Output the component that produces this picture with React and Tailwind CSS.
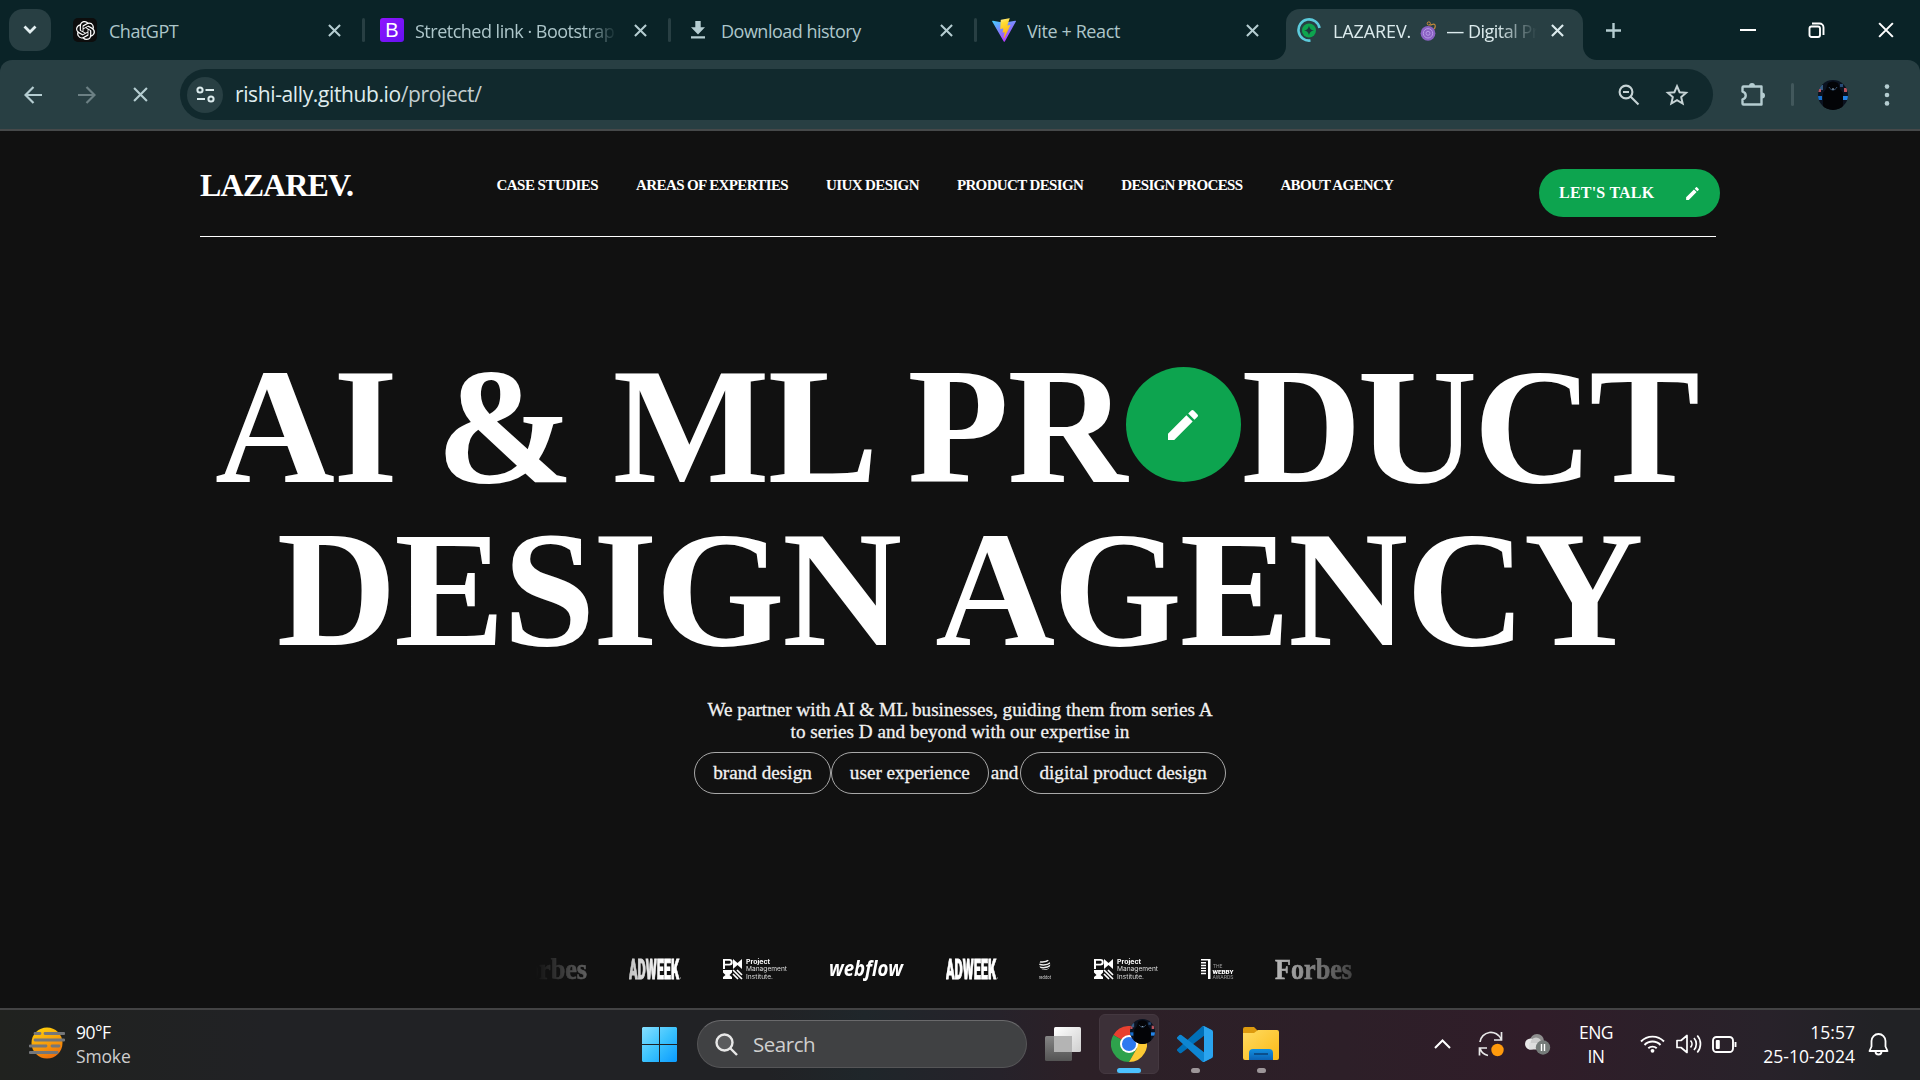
import React from "react";
import { MdModeEdit } from "react-icons/md";

const ui = "font-['Open_Sans','Noto_Sans',sans-serif]";
const serif = "font-['Liberation_Serif',serif]";

function Close({ size = 14, width = 2.2 }) {
  return (
    <svg width={size} height={size} viewBox="0 0 14 14" fill="none" stroke="currentColor" strokeWidth={width}>
      <path d="M1 1l12 12M13 1L1 13" />
    </svg>
  );
}

function OpenAIIcon() {
  return (
    <span className="-ml-px mr-px flex size-6 items-center justify-center rounded-[5px] bg-[#0d0d0d] text-white">
      <svg width="19" height="19" viewBox="0 0 24 24" fill="currentColor">
        <path d="M22.2819 9.8211a5.9847 5.9847 0 0 0-.5157-4.9108 6.0462 6.0462 0 0 0-6.5098-2.9A6.0651 6.0651 0 0 0 4.9807 4.1818a5.9847 5.9847 0 0 0-3.9977 2.9 6.0462 6.0462 0 0 0 .7427 7.0966 5.98 5.98 0 0 0 .511 4.9107 6.051 6.051 0 0 0 6.5146 2.9001A5.9847 5.9847 0 0 0 13.2599 24a6.0557 6.0557 0 0 0 5.7718-4.2058 5.9894 5.9894 0 0 0 3.9977-2.9001 6.0557 6.0557 0 0 0-.7475-7.0729zm-9.022 12.6081a4.4755 4.4755 0 0 1-2.8764-1.0408l.1419-.0804 4.7783-2.7582a.7948.7948 0 0 0 .3927-.6813v-6.7369l2.02 1.1686a.071.071 0 0 1 .038.052v5.5826a4.504 4.504 0 0 1-4.4945 4.4944zm-9.6607-4.1254a4.4708 4.4708 0 0 1-.5346-3.0137l.142.0852 4.783 2.7582a.7712.7712 0 0 0 .7806 0l5.8428-3.3685v2.3324a.0804.0804 0 0 1-.0332.0615L9.74 19.9502a4.4992 4.4992 0 0 1-6.1408-1.6464zM2.3408 7.8956a4.485 4.485 0 0 1 2.3655-1.9728V11.6a.7664.7664 0 0 0 .3879.6765l5.8144 3.3543-2.0201 1.1685a.0757.0757 0 0 1-.071 0l-4.8303-2.7865A4.504 4.504 0 0 1 2.3408 7.872zm16.5963 3.8558L13.1038 8.364 15.1192 7.2a.0757.0757 0 0 1 .071 0l4.8303 2.7913a4.4944 4.4944 0 0 1-.6765 8.1042v-5.6772a.79.79 0 0 0-.407-.667zm2.0107-3.0231l-.142-.0852-4.7735-2.7818a.7759.7759 0 0 0-.7854 0L9.409 9.2297V6.8974a.0662.0662 0 0 1 .0284-.0615l4.8303-2.7866a4.4992 4.4992 0 0 1 6.6802 4.66zM8.3065 12.863l-2.02-1.1638a.0804.0804 0 0 1-.038-.0567V6.0742a4.4992 4.4992 0 0 1 7.3757-3.4537l-.142.0805L8.704 5.459a.7948.7948 0 0 0-.3927.6813zm1.0976-2.3654l2.602-1.4998 2.6069 1.4998v2.9994l-2.5974 1.4997-2.6067-1.4997Z" />
      </svg>
    </span>
  );
}

function BootstrapIcon() {
  return (
    <span className="flex size-6 items-center justify-center rounded-[3px] bg-linear-to-br from-[#9013fe] to-[#6610f2] font-['Liberation_Sans',sans-serif] text-[20px] leading-none text-white">
      B
    </span>
  );
}

function DownloadIcon() {
  return (
    <svg width="24" height="24" viewBox="0 0 24 24" fill="#b5cdd1">
      <path d="M9.3 3h5.4v6.2H19L12 16.500 5 9.200h4.300zM5 18.300h14v2.200H5z" />
    </svg>
  );
}

function ViteIcon() {
  return (
    <svg width="24" height="24" viewBox="0 0 24 24">
      <defs>
        <linearGradient id="viteA" x1="0" y1="0" x2="0.6" y2="1">
          <stop offset="0" stopColor="#41d1ff" />
          <stop offset="1" stopColor="#bd34fe" />
        </linearGradient>
        <linearGradient id="viteB" x1="0.4" y1="0" x2="0.6" y2="1">
          <stop offset="0" stopColor="#ffea83" />
          <stop offset="0.2" stopColor="#ffdd35" />
          <stop offset="1" stopColor="#ffa800" />
        </linearGradient>
      </defs>
      <path d="M23.900 3.600L12.800 23.500a.6.6 0 0 1-1.050 0L.2 3.600a.6.6 0 0 1 .65-.9L12 4.700l11.200-2a.6.6 0 0 1 .7.9z" fill="url(#viteA)" />
      <path d="M17.300.2L9 1.800a.35.35 0 0 0-.25.3l-.5 8.600c0 .2.180.350.380.300l2.300-.530c.2-.05.400.140.360.350l-.7 3.400c-.05.220.160.420.380.350l1.420-.430c.220-.070.430.120.380.350l-1.080 5.200c-.07.330.360.500.550.230l6.200-12.600c.1-.2-.08-.450-.300-.400l-2.400.460c-.22.050-.42-.17-.35-.39L17.700.6c.06-.22-.15-.430-.4-.400z" fill="url(#viteB)" />
    </svg>
  );
}

function LoadingIcon() {
  return (
    <svg width="24" height="24" viewBox="0 0 24 24" fill="none">
      <path d="M22.500 10A10.600 10.600 0 1 0 13.500 22.500" stroke="#5ccbdc" strokeWidth="2.600" />
      <circle cx="12" cy="12.500" r="7" fill="#0ea44f" />
      <path d="M12 7.500c.7 3.300 1.700 4.300 5 5-3.300.7-4.300 1.700-5 5-.7-3.300-1.700-4.300-5-5 3.300-.7 4.300-1.700 5-5z" fill="#1c3a3d" />
    </svg>
  );
}

/* Small purple bomb with a curled fuse. */
function BombIcon() {
  return (
    <svg width="17" height="20" viewBox="0 0 17 20" fill="none" className="mx-[9px] shrink-0">
      <path d="M14 8c1.500-1.500 1.700-4 .3-4.700-1.600-.8-2.800 1.200-4.600.6" stroke="#c98a3b" strokeWidth="1.200" />
      <circle cx="8.800" cy="2.500" r="1.600" stroke="#c98a3b" />
      <circle cx="8" cy="12.300" r="7.400" fill="#8b62c4" />
      <circle cx="8" cy="12.300" r="4.700" stroke="#b79ae6" />
      <circle cx="8" cy="12.300" r="2" stroke="#b79ae6" />
    </svg>
  );
}

function Tab({ icon, label, track, fade }) {
  return (
    <div className="flex h-[60px] w-[306px] shrink-0 items-center pl-[15px]">
      {icon}
      <span
        className={`ml-[11px] w-[200px] overflow-hidden whitespace-nowrap pt-px text-[18px] leading-6 text-[#adc6ca] ${track} ${
          fade ? "[mask-image:linear-gradient(to_right,#000_170px,transparent_202px)]" : ""
        }`}
      >
        {label}
      </span>
      <span className="ml-[19px] text-[#b5cdd1]">
        <Close size={13} />
      </span>
      <span className="ml-auto h-6 w-[3px] rounded bg-[#283f43]" />
    </div>
  );
}

function TabStrip() {
  return (
    <div className="flex h-[60px] items-center bg-[#0a2327]">
      <button className="ml-[9px] mr-2 flex size-[42px] shrink-0 items-center justify-center rounded-[14px] bg-[#283f43] text-[#e4f0f2]">
        <svg width="14" height="10" viewBox="0 0 14 10" fill="none" stroke="currentColor" strokeWidth="2.800">
          <path d="M1.500 1.500L7 7l5.500-5.500" />
        </svg>
      </button>
      <Tab icon={<OpenAIIcon />} label="ChatGPT" track="tracking-[-0.5px]" />
      <Tab icon={<BootstrapIcon />} label="Stretched link · Bootstrap v5" track="tracking-[-0.5px]" fade />
      <Tab icon={<DownloadIcon />} label="Download history" track="tracking-[-0.5px]" />
      <div className="w-[302px] shrink-0 overflow-hidden">
        <Tab icon={<ViteIcon />} label="Vite + React" track="tracking-[-0.4px]" />
      </div>
      <div className="relative ml-[7px] mt-[9px] flex h-[51px] w-[297px] shrink-0 items-center rounded-t-[14px] bg-[#283f43] pb-[9px] pl-[11px]">
        <svg className="absolute -left-[14px] bottom-0" width="14" height="14" viewBox="0 0 14 14" fill="#283f43">
          <path d="M14 0v14H0A14 14 0 0 0 14 0z" />
        </svg>
        <svg className="absolute -right-[14px] bottom-0" width="14" height="14" viewBox="0 0 14 14" fill="#283f43">
          <path d="M0 0v14h14A14 14 0 0 1 0 0z" />
        </svg>
        <LoadingIcon />
        <span className="ml-3 flex w-[204px] items-center overflow-hidden whitespace-nowrap pt-px text-[18px] leading-6 tracking-[-0.5px] text-[#dcebed] [mask-image:linear-gradient(to_right,#000_165px,transparent_204px)]">
          <span className="tracking-[-0.1px]">LAZAREV.</span>
          <BombIcon />
          — Digital Product
        </span>
        <span className="ml-[14px] text-[#dcebed]">
          <Close size={13} width={2.300} />
        </span>
      </div>
      <svg className="ml-[22px] text-[#b5cdd1]" width="17" height="17" viewBox="0 0 17 17" stroke="currentColor" strokeWidth="2.400">
        <path d="M8.500 1v15M1 8.500h15" />
      </svg>
      <div className="ml-auto flex text-white">
        <span className="flex h-[60px] w-[69px] items-center justify-center">
          <span className="h-[2px] w-4 bg-white" />
        </span>
        <span className="flex h-[60px] w-[69px] items-center justify-center">
          <svg width="17" height="17" viewBox="0 0 17 17" fill="none" stroke="currentColor" strokeWidth="1.900">
            <rect x="1.500" y="4.500" width="10.500" height="10.500" rx="2" />
            <path d="M4 1.500h7.500a4 4 0 0 1 4 4V13" />
          </svg>
        </span>
        <span className="flex h-[60px] w-[69px] items-center justify-center">
          <Close size={16} width={1.800} />
        </span>
      </div>
    </div>
  );
}

/* Dark figure lit by blue and red lights; used in the toolbar and on the taskbar. */
function Avatar({ size }) {
  return (
    <svg width={size} height={size} viewBox="0 0 30 30">
      <defs>
        <clipPath id={"av" + size}>
          <circle cx="15" cy="15" r="15" />
        </clipPath>
      </defs>
      <g clipPath={`url(#av${size})`}>
        <rect width="30" height="30" fill="#0a1220" />
        <rect x="1" y="5" width="4" height="5" fill="#355b82" />
        <rect x="0" y="9" width="3" height="3" fill="#b8525c" />
        <rect x="0" y="16" width="4" height="4" fill="#1670cf" />
        <rect x="26" y="8" width="3" height="4" fill="#b8525c" />
        <rect x="25" y="16" width="5" height="4" fill="#2384e6" />
        <rect x="22" y="4" width="3" height="3" fill="#284c77" />
        <path d="M10 3q5-3 10 0l2 6 3 4v17H5V13l3-4z" fill="#030407" />
        <path d="M11 7c2 4 6 4 8 0" stroke="#34506f" fill="none" />
        <path d="M14 9h2" stroke="#9cb6cc" />
      </g>
    </svg>
  );
}

function Toolbar() {
  return (
    <div className="bg-[#0a2327]">
      <div className="flex h-[69px] items-center rounded-t-[12px] bg-[#283f43] text-[#b5cdd1]">
        <svg className="ml-6" width="18" height="18" viewBox="0 0 18 18" fill="none" stroke="currentColor" strokeWidth="2.200">
          <path d="M18 9H2M9.500 1L1.500 9l8 8" />
        </svg>
        <svg className="ml-9 text-[#6c8084]" width="18" height="18" viewBox="0 0 18 18" fill="none" stroke="currentColor" strokeWidth="2.200">
          <path d="M0 9h16M8.500 1l8 8-8 8" />
        </svg>
        <span className="ml-[37px]">
          <Close size={15} width={2} />
        </span>
        <div className="ml-8 flex h-[51px] w-[1533px] items-center rounded-full bg-[#11292d]">
          <span className="ml-[7px] flex size-9 items-center justify-center rounded-full bg-[#283f43] text-[#dcebed]">
            <svg width="19" height="17" viewBox="0 0 19 17" fill="none" stroke="currentColor" strokeWidth="2">
              <circle cx="4" cy="4" r="2.600" />
              <path d="M9.500 4H18M1 13h8" />
              <circle cx="15" cy="13" r="2.600" />
            </svg>
          </span>
          <span className="-mt-px ml-3 whitespace-nowrap text-[21px] leading-7 tracking-[-0.38px] text-[#dfecee]">
            rishi-ally.github.io<span className="text-[#c4cfd1]">/project/</span>
          </span>
          <svg className="ml-auto text-[#c6d3d5]" width="22" height="22" viewBox="0 0 22 22" fill="none" stroke="currentColor" strokeWidth="2.100">
            <circle cx="8" cy="8" r="6.400" />
            <path d="M5 8h6M12.500 12.500l8 8" />
          </svg>
          <svg className="ml-[25px] mr-6 text-[#c6d3d5]" width="24" height="24" viewBox="0 0 24 24" fill="none" stroke="currentColor" strokeWidth="2">
            <path d="M12 3.200l2.600 6 6.500.6-4.900 4.300 1.450 6.400L12 17.100l-5.650 3.400 1.450-6.400-4.900-4.300 6.500-.6z" />
          </svg>
        </div>
        <svg className="ml-[27px]" width="26" height="26" viewBox="0 0 26 26" fill="none" stroke="currentColor" strokeWidth="2.400">
          <path d="M3.500 4.500h18v18h-18a1 1 0 0 1-1-1v-4.200c4.300-1 4.300-6.700 0-7.700V5.500a1 1 0 0 1 1-1z" strokeLinejoin="round" />
          <path d="M9 4a3 3 0 0 1 6 0zM22 10.500a3 3 0 0 1 0 6z" fill="currentColor" stroke="none" />
        </svg>
        <span className="ml-[25px] h-[23px] w-[3px] rounded bg-[#42585c]" />
        <span className="ml-6">
          <Avatar size={30} />
        </span>
        <svg className="ml-[36px]" width="6" height="22" viewBox="0 0 6 22" fill="currentColor">
          <circle cx="3" cy="2.600" r="2.300" />
          <circle cx="3" cy="11" r="2.300" />
          <circle cx="3" cy="19.400" r="2.300" />
        </svg>
      </div>
      <div className="h-[2px] bg-[#46494a]" />
    </div>
  );
}

const links = [
  { label: "CASE STUDIES", track: "tracking-[-0.53px]" },
  { label: "AREAS OF EXPERTIES", track: "tracking-[-0.62px]" },
  { label: "UIUX DESIGN", track: "tracking-[-0.62px]" },
  { label: "PRODUCT DESIGN", track: "tracking-[-0.63px]" },
  { label: "DESIGN PROCESS", track: "tracking-[-0.66px]" },
  { label: "ABOUT AGENCY", track: "tracking-[-0.68px]" },
];

function SiteHeader() {
  return (
    <header className="mx-[200px] flex h-[106px] w-[1516px] items-start border-b border-white font-bold text-white">
      <div className="mt-[36px] w-[296.5px] text-[32px] leading-[36px] tracking-[-0.9px]">LAZAREV.</div>
      <nav className="mt-[45px] flex gap-[38px] whitespace-nowrap text-[15px] leading-[18px]">
        {links.map((l) => (
          <a key={l.label} className={l.track}>
            {l.label}
          </a>
        ))}
      </nav>
      <button className="-mr-1 ml-auto mt-[38px] flex h-12 w-[181px] items-center whitespace-nowrap rounded-full bg-[#0da44f] pl-5 pr-[19px] text-[16px] tracking-[0.22px]">
        LET'S TALK
        <MdModeEdit className="ml-auto size-[17px]" />
      </button>
    </header>
  );
}

function Hero() {
  return (
    <section className="flex flex-col items-center text-white">
      <h1 className="mt-[108px] whitespace-nowrap text-center text-[166px] font-bold leading-[163px]">
        <span className="flex justify-center pr-[9px]">
          <span className="tracking-[-1.6px]">AI &amp; ML PR</span>
          <span className="mt-[22px] flex size-[115px] items-center justify-center rounded-full bg-[#0da44f]">
            <MdModeEdit className="size-10" />
          </span>
          <span className="ml-px tracking-[-4px]">DUCT</span>
        </span>
        <span className="block pr-0.5 tracking-[-2.2px] [word-spacing:5px]">DESIGN AGENCY</span>
      </h1>
      <p className="mt-7 w-[520px] text-center text-[19.2px] leading-[22px] text-[#f2f2f2] [-webkit-text-stroke:0.3px_#f2f2f2]">
        We partner with AI &amp; ML businesses, guiding them from series A
        <br />
        to series D and beyond with our expertise in
      </p>
      <div className="mt-[9px] flex items-center text-[19.2px] leading-[22px] text-[#f2f2f2] [-webkit-text-stroke:0.3px_#f2f2f2]">
        <span className="flex h-[42px] items-center rounded-[21px] border border-[#a8a8a8] px-[18px]">brand design</span>
        <span className="flex h-[42px] items-center rounded-[21px] border border-[#a8a8a8] px-[18px]">user experience</span>
        <span className="px-0.5">and</span>
        <span className="flex h-[42px] items-center rounded-[21px] border border-[#a8a8a8] px-[18px]">digital product design</span>
      </div>
    </section>
  );
}

function Forbes() {
  return (
    <svg width="77" height="22" viewBox="0 0 77 22" className="shrink-0">
      <text x="0" y="20.500" textLength="77" lengthAdjust="spacingAndGlyphs" fontFamily="Liberation Serif, serif" fontWeight="700" fontSize="29" fill="#d4d4d4" stroke="#d4d4d4" strokeWidth="0.600">
        Forbes
      </text>
    </svg>
  );
}

function Adweek() {
  return (
    <svg width="52" height="22" viewBox="0 0 52 22" className="shrink-0">
      <text x="0" y="20.500" textLength="50" lengthAdjust="spacingAndGlyphs" fontFamily="Roboto, sans-serif" fontWeight="900" fontSize="27.500" fill="#fff" stroke="#fff" strokeWidth="0.900">
        ADWEEK
      </text>
      <rect x="51" y="19.500" width="1" height="1" fill="#aaa" />
    </svg>
  );
}

function Pmi() {
  return (
    <svg width="65" height="22" viewBox="0 0 65 22" className="shrink-0" fontFamily="Inter, sans-serif" fontSize="6.500">
      <g fill="#fff">
        <path d="M0 1h6.500a3.200 3.200 0 0 1 0 6.400H2V11H0zM2 2.800v2.900h4.300a1.450 1.450 0 0 0 0-2.900z" fillRule="evenodd" />
        <path d="M10 1l4.500 4L19 1v10l-4.500-4L10 11z" />
        <path d="M0 12h9v2.500L6.500 17 9 19v2H0v-2l2.500-2L0 14.500z" />
      </g>
      <path d="M10 12l9 9M14 12l5 5M10 16l5 5" stroke="#fff" strokeWidth="1.700" />
      <text x="23" y="6.400" fontWeight="700" textLength="24" lengthAdjust="spacingAndGlyphs" fill="#fff">Project</text>
      <text x="23" y="13.400" textLength="41" lengthAdjust="spacingAndGlyphs" fill="#ddd">Management</text>
      <text x="23" y="20.600" textLength="27" lengthAdjust="spacingAndGlyphs" fill="#ddd">Institute.</text>
    </svg>
  );
}

function Webflow() {
  return (
    <svg width="75" height="26" viewBox="0 0 75 26" className="shrink-0">
      <text x="0" y="20" textLength="74" lengthAdjust="spacingAndGlyphs" fontFamily="Open Sans, sans-serif" fontStyle="italic" fontWeight="700" fontSize="21" fill="#fff">
        webflow
      </text>
    </svg>
  );
}

function Reddot() {
  return (
    <svg width="13" height="22" viewBox="0 0 13 22" className="shrink-0">
      <defs>
        <clipPath id="dot">
          <circle cx="5.800" cy="6.500" r="5.500" />
        </clipPath>
      </defs>
      <g clipPath="url(#dot)" stroke="#eee" strokeWidth="1.500" fill="none">
        <path d="M0 3.500q6 2 11-2.500M0 6.300q7 2 12-2M0 9q7 2 12-2M1 11.800q6 1.500 11-2" />
      </g>
      <text x="0" y="21" textLength="12" lengthAdjust="spacingAndGlyphs" fontFamily="Roboto, sans-serif" fontSize="4.500" fill="#ccc">
        reddot
      </text>
    </svg>
  );
}

function Webby() {
  return (
    <svg width="33" height="22" viewBox="0 0 33 22" className="shrink-0" fontFamily="Roboto, sans-serif" fontSize="5">
      <path d="M0 1h9.500v20H7V2.500H0zM0 4h5v1.500H0zM0 6.700h5v1.500H0zM0 9.400h5v1.500H0zM0 12.100h5v1.500H0zM0 14.800h5v1.500H0z" fill="#fff" />
      <text x="12" y="9.500" fill="#999">THE</text>
      <text x="11.500" y="15.500" fontWeight="900" textLength="21" lengthAdjust="spacingAndGlyphs" fill="#fff">WEBBY</text>
      <text x="11.500" y="21" textLength="21" lengthAdjust="spacingAndGlyphs" fill="#999">AWARDS</text>
    </svg>
  );
}

function Partners() {
  return (
    <div className="mx-auto mb-[26px] mt-auto flex h-[26px] w-[850px] items-center overflow-hidden [mask-image:linear-gradient(to_right,transparent,#000_15%,#000_85%,transparent)]">
      <span className="-ml-[25px]">
        <Forbes />
      </span>
      <div className="ml-[42px] flex items-center gap-[41.6px]">
        <Adweek />
        <Pmi />
        <Webflow />
        <Adweek />
        <Reddot />
        <Pmi />
        <Webby />
        <Forbes />
      </div>
    </div>
  );
}

function WeatherIcon() {
  return (
    <svg width="36" height="32" viewBox="0 0 36 32">
      <defs>
        <linearGradient id="sun" x1="0.300" y1="0" x2="0.700" y2="1">
          <stop offset="0" stopColor="#ffcf0a" />
          <stop offset="1" stopColor="#ef6c0c" />
        </linearGradient>
      </defs>
      <circle cx="18" cy="16" r="15.500" fill="url(#sun)" />
      <path d="M6 6.500h5M16 6.500h19M6 13h29M1 19h16M23 19h7M1 25.500h27" stroke="#75777a" strokeWidth="2.800" strokeLinecap="round" />
    </svg>
  );
}

function WindowsIcon() {
  return (
    <svg width="35" height="35" viewBox="0 0 35 35">
      <defs>
        <linearGradient id="win" x1="0" y1="0" x2="1" y2="1">
          <stop offset="0" stopColor="#86dfff" />
          <stop offset="0.500" stopColor="#3cc3fd" />
          <stop offset="1" stopColor="#0a9bff" />
        </linearGradient>
      </defs>
      <path d="M1 0h16v17H0V1zM18 0h16l1 1v16H18zM0 18h17v17H1l-1-1zM18 18h17v16l-1 1H18z" fill="url(#win)" />
    </svg>
  );
}

function TaskViewIcon() {
  return (
    <svg width="36" height="36" viewBox="0 0 36 36">
      <defs>
        <linearGradient id="tvl" x1="0" y1="0" x2="1" y2="1">
          <stop offset="0" stopColor="#fff" />
          <stop offset="1" stopColor="#cfcfcf" />
        </linearGradient>
        <linearGradient id="tvd" x1="0" y1="0" x2="0" y2="1">
          <stop offset="0" stopColor="#858585" />
          <stop offset="1" stopColor="#545454" />
        </linearGradient>
      </defs>
      <rect x="0" y="10" width="27" height="25" rx="1.500" fill="url(#tvd)" />
      <rect x="9" y="1" width="27" height="25" rx="1.500" fill="url(#tvl)" />
      <rect x="9" y="10" width="18" height="16" fill="#b4b4b4" />
    </svg>
  );
}

function ChromeIcon() {
  return (
    <svg width="36" height="36" viewBox="0 0 48 48">
      <path d="M24 24L3.200 12A24 24 0 0 1 44.800 12H24z" fill="#e8402f" />
      <path d="M24 24L3.200 12A24 24 0 0 0 24 48L34.400 30z" fill="#2ea24c" />
      <path d="M24 12h20.800A24 24 0 0 1 24 48L34.400 30z" fill="#fcc934" />
      <circle cx="24" cy="24" r="12" fill="#fff" />
      <circle cx="24" cy="24" r="9.400" fill="#2d79f0" />
    </svg>
  );
}

function VsCodeIcon() {
  return (
    <svg width="36" height="36" viewBox="0 0 100 100">
      <path fill="#0070b8" d="M96.460 10.800L75.860.880a6.230 6.230 0 0 0-7.100 1.200L1.300 63.600a4.170 4.170 0 0 0 0 6.170l5.500 5a4.170 4.170 0 0 0 5.330.240l81.230-61.600c2.720-2.070 6.630-.130 6.630 3.300v-.240a6.250 6.250 0 0 0-3.540-5.630z" />
      <path fill="#0e86d2" d="M96.460 89.200l-20.600 9.920a6.230 6.230 0 0 1-7.100-1.200L1.300 36.400a4.170 4.170 0 0 1 0-6.170l5.500-5a4.170 4.170 0 0 1 5.330-.240l81.230 61.600c2.720 2.070 6.630.130 6.630-3.300v.240a6.250 6.250 0 0 1-3.540 5.640z" />
      <path fill="#2aa4ef" d="M75.860 99.130a6.230 6.230 0 0 1-7.100-1.210c2.300 2.300 6.240.670 6.240-2.600V4.680c0-3.270-3.950-4.900-6.240-2.600a6.230 6.230 0 0 1 7.100-1.200l20.600 9.900A6.250 6.250 0 0 1 100 16.400v67.200a6.250 6.250 0 0 1-3.540 5.630z" />
    </svg>
  );
}

function ExplorerIcon() {
  return (
    <svg width="36" height="34" viewBox="0 0 36 34">
      <defs>
        <linearGradient id="fold" x1="0" y1="0" x2="1" y2="1">
          <stop offset="0" stopColor="#ffdb61" />
          <stop offset="1" stopColor="#fbb916" />
        </linearGradient>
        <linearGradient id="foldb" x1="0" y1="0" x2="0" y2="1">
          <stop offset="0" stopColor="#1290e0" />
          <stop offset="1" stopColor="#0c62b4" />
        </linearGradient>
      </defs>
      <path d="M0 2a2 2 0 0 1 2-2h9l4 4h8v6H0z" fill="#dd9a0e" />
      <path d="M0 6h11l4-3h19a2 2 0 0 1 2 2v26a2 2 0 0 1-2 2H2a2 2 0 0 1-2-2z" fill="url(#fold)" />
      <path d="M6 33V26a4 4 0 0 1 4-4h16a4 4 0 0 1 4 4v7z" fill="url(#foldb)" />
      <path d="M11 27h14" stroke="#0b4a85" strokeWidth="1.800" />
    </svg>
  );
}

function Taskbar() {
  return (
    <div className="flex h-[72px] shrink-0 items-center border-t-2 border-[#434344] bg-[linear-gradient(to_right,#20221f_0%,#212225_14%,#212225_40%,#1f262a_45%,#26222a_52%,#2c2027_56%,#2d1f28_70%,#301d29_80%,#28222a_92%,#212225_98%)] pb-0.5 text-white">
      <div className="flex w-[642px] items-center">
        <span className="-mt-0.5 ml-[29px]">
          <WeatherIcon />
        </span>
        <div className="ml-[11px] text-[17.500px] leading-6 tracking-[-0.5px]">
          <div>90°F</div>
          <div className="tracking-[-0.15px] text-[#cfcfcf]">Smoke</div>
        </div>
      </div>
      <WindowsIcon />
      <div className="ml-5 flex h-12 w-[330px] items-center rounded-full border border-[#555557] border-t-[#6a6a6c] bg-[#404143]">
        <svg className="ml-[17px]" width="23" height="23" viewBox="0 0 23 23" fill="none" stroke="#e8e8e8" strokeWidth="2.400">
          <circle cx="9.500" cy="9.500" r="8" fill="#5a5b5d" />
          <path d="M15.500 15.500l6.500 6.500" />
        </svg>
        <span className="ml-[15px] text-[20.500px] tracking-[-0.45px] text-[#cfcfcf]">Search</span>
      </div>
      <span className="ml-[18px]">
        <TaskViewIcon />
      </span>
      <div className="relative ml-[18px] flex size-[60px] items-center justify-center rounded-md border border-[#443840] bg-[#3c3038]">
        <ChromeIcon />
        <span className="absolute right-[3px] top-[4px]">
          <Avatar size={25} />
        </span>
        <span className="absolute bottom-0 left-[17px] h-[5px] w-6 rounded-full bg-[#4cc2ff]" />
      </div>
      <div className="relative ml-[18px]">
        <VsCodeIcon />
        <span className="absolute -bottom-[11px] left-[14px] h-[5px] w-[9px] rounded-full bg-[#9d9699]" />
      </div>
      <div className="relative ml-[30px]">
        <ExplorerIcon />
        <span className="absolute -bottom-3 left-[14px] h-[5px] w-[9px] rounded-full bg-[#9d9699]" />
      </div>
      <div className="ml-auto flex items-center">
        <svg width="17" height="10" viewBox="0 0 17 10" fill="none" stroke="#fff" strokeWidth="2">
          <path d="M1 9l7.500-7.500L16 9" />
        </svg>
        <svg className="ml-[27px]" width="26" height="26" viewBox="0 0 26 26" fill="none" stroke="#e8e8e8" strokeWidth="1.700">
          <path d="M2 11A11 11 0 0 1 23 8M23.500 1v8h-7.500M10 24.500a11 11 0 0 1-8-7M1.500 24.500V17H9" />
          <circle cx="19.500" cy="19" r="6.200" fill="#ff9a0c" stroke="none" />
        </svg>
        <svg className="ml-[21px]" width="26" height="22" viewBox="0 0 26 22">
          <circle cx="12" cy="8" r="7" fill="#8e8e8e" />
          <circle cx="5.500" cy="11" r="5.500" fill="#e8e8e8" />
          <circle cx="11" cy="10" r="5.500" fill="#cdcdcd" />
          <rect x="4" y="10" width="12" height="6.500" fill="#dedede" />
          <circle cx="18" cy="14.500" r="7.200" fill="#757b79" />
          <path d="M16.500 11v7M19.500 11v7" stroke="#fff" strokeWidth="1.400" />
        </svg>
        <div className="ml-[27px] w-9 text-center text-[17.500px] leading-6 tracking-[-0.5px]">
          ENG
          <br />
          IN
        </div>
        <svg className="ml-[26px]" width="25" height="18" viewBox="0 0 25 18" fill="none" stroke="#fff" strokeWidth="1.900">
          <path d="M1 6.500a16 16 0 0 1 23 0M4.500 10a11 11 0 0 1 16 0M8.300 13.300a6 6 0 0 1 8.400 0" />
          <circle cx="12.500" cy="15.800" r="1.900" fill="#fff" stroke="none" />
        </svg>
        <svg className="ml-[11px]" width="26" height="20" viewBox="0 0 26 20" fill="none" stroke="#fff" strokeWidth="1.700">
          <path d="M1 6.500h4L11 1.500v17l-6-5H1z" strokeLinejoin="round" />
          <path d="M14.500 6.500a5 5 0 0 1 0 7M18 4a9 9 0 0 1 0 12M21.300 1.500a13 13 0 0 1 0 17" />
        </svg>
        <svg className="ml-[10px]" width="25" height="17" viewBox="0 0 25 17" fill="none" stroke="#fff" strokeWidth="1.900">
          <rect x="1" y="1" width="20" height="15" rx="3.500" />
          <rect x="3.800" y="4" width="4" height="9" rx="1" fill="#fff" stroke="none" />
          <path d="M23.500 6v5" />
        </svg>
        <div className="ml-[21px] w-[97px] whitespace-nowrap text-right text-[17.500px] leading-6 tracking-[0.05px]">
          15:57
          <br />
          25-10-2024
        </div>
        <svg className="ml-[13px] mr-[31px]" width="21" height="23" viewBox="0 0 21 23" fill="none" stroke="#fff" strokeWidth="1.800" strokeLinejoin="round">
          <path d="M1.500 18L3.500 13.500V8a7 7 0 0 1 14 0v5.500L19.500 18z" />
          <path d="M7.500 18.500a3 3 0 0 0 6 0" />
        </svg>
      </div>
    </div>
  );
}

export default function App() {
  return (
    <div className={`flex h-[1080px] w-[1920px] flex-col overflow-hidden bg-[#111111] ${ui}`}>
      <TabStrip />
      <Toolbar />
      <main className={`flex min-h-0 flex-1 flex-col bg-[#111111] ${serif}`}>
        <SiteHeader />
        <Hero />
        <Partners />
      </main>
      <Taskbar />
    </div>
  );
}
